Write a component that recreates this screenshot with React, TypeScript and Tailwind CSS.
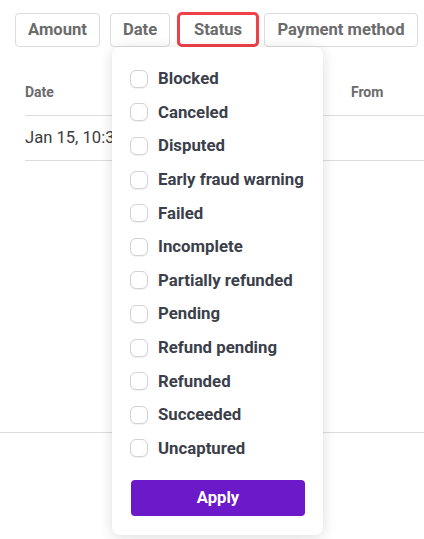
import React from "react";

const statuses = [
  "Blocked",
  "Canceled",
  "Disputed",
  "Early fraud warning",
  "Failed",
  "Incomplete",
  "Partially refunded",
  "Pending",
  "Refund pending",
  "Refunded",
  "Succeeded",
  "Uncaptured",
];

export default function App() {
  return (
    <div
      className="relative w-[424px] h-[539px] bg-white overflow-hidden"
      style={{ fontFamily: "Roboto, 'Liberation Sans', sans-serif" }}
    >
      {/* Filter buttons */}
      <div className="flex items-center pt-3 pl-[15px]">
        <button className="h-[34px] w-[85px] rounded border border-[#dcdcdc] pt-[2px] text-[16.6px] font-bold text-[#6b6b6b]">
          Amount
        </button>
        <button className="ml-[10px] h-[34px] w-[60px] rounded border border-[#dcdcdc] pt-[2px] text-[16.6px] font-bold text-[#6b6b6b]">
          Date
        </button>
        <button className="ml-[7px] h-[35px] w-[82px] rounded-[5px] border-[3px] border-[#ef4149] pt-[2px] text-[16.6px] font-bold text-[#6b6b6b]">
          Status
        </button>
        <button className="ml-[5px] h-[34px] w-[154px] rounded border border-[#dcdcdc] pt-[2px] text-[16.6px] font-bold text-[#6b6b6b]">
          Payment method
        </button>
      </div>

      {/* Table */}
      <div className="mt-[22px] pl-[25px]">
        <div className="flex h-[47px] items-center border-b border-[#dcdcdc] text-[14px] font-bold text-[#6b6b6b]">
          <span>Date</span>
          <span className="ml-[297px]">From</span>
        </div>
        <div className="flex h-[45px] items-center border-b border-[#dcdcdc] text-[16.6px] text-[#3c3c3c]">
          Jan 15, 10:30 AM
        </div>
      </div>
      <div className="mt-[271px] border-b border-[#dcdcdc]" />

      {/* Status dropdown */}
      <div className="absolute left-[112px] top-[47px] w-[211px] h-[488px] rounded-lg bg-white shadow-[0_2px_14px_rgba(0,0,0,0.14)] pl-[18px] pr-[19px] pt-[15px]">
        <div className="flex flex-col">
          {statuses.map((s) => (
            <label key={s} className="flex h-[33.6px] items-center">
              <span className="h-[18px] w-[18px] rounded-[6px] border border-[#d2d2d2] bg-white shadow-[0_1px_1px_rgba(0,0,0,0.06)]" />
              <span className="ml-[10px] text-[16.8px] font-bold text-[#3c3f4a]">
                {s}
              </span>
            </label>
          ))}
        </div>
        <button className="mt-[15px] h-[36px] w-[174px] ml-[1px] rounded bg-[#6b19c9] text-[16.6px] font-bold text-white">
          Apply
        </button>
      </div>
    </div>
  );
}
